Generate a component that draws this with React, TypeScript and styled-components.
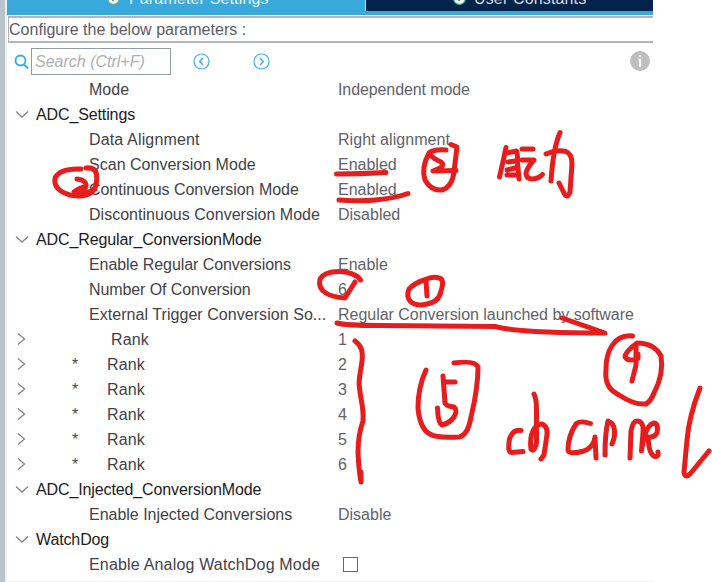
import React from "react";
import styled, { createGlobalStyle } from "styled-components";

const Global = createGlobalStyle`
  * { box-sizing: border-box; }
  body { margin: 0; background: #fff; font-family: "Liberation Sans", Arial, sans-serif; font-size: 16px; overflow: hidden; }
`;

const Window = styled.main`
  position: relative;
  display: flex;
  width: 712px;
  height: 582px;
  overflow: hidden;
`;

const Splitter = styled.div`
  width: 7px;
  flex: none;
  background: #b8c4ca;
  border-right: 2px solid #eef1f3;
`;

const Panel = styled.section`
  display: flex;
  flex-direction: column;
  width: 646px;
`;

const Tabs = styled.div`
  display: flex;
  height: 15px;
  background: #39a9dc;
  border-bottom: 3px solid #39a9dc;
`;

const Tab = styled.div<{ $active?: boolean }>`
  display: flex;
  align-items: center;
  gap: ${(p) => (p.$active ? 9 : 8)}px;
  width: ${(p) => (p.$active ? 359 : 287)}px;
  height: 25px;
  margin-top: -14px;
  padding-left: ${(p) => (p.$active ? 100 : 87)}px;
  background: ${(p) => (p.$active ? "#39a9dc" : "#03234b")};
  border-right: ${(p) => (p.$active ? "1px solid #c8dce8" : "0")};
  color: ${(p) => (p.$active ? "#eef7fc" : "#d5dce4")};
  letter-spacing: 0.15px;
  white-space: nowrap;
`;

const Caption = styled.div`
  display: flex;
  align-items: center;
  height: 27px;
  margin: 1px 0 0 1px;
  border: solid #b2b6bb;
  border-width: 2px 0 2px 1px;
  color: #5c5c62;
  letter-spacing: 0.02px;
`;

const Toolbar = styled.div`
  display: flex;
  align-items: center;
  height: 34px;
  padding: 3px 3px 1px 7px;
`;

const SearchField = styled.div`
  display: flex;
  align-items: center;
  width: 140px;
  height: 27px;
  margin: 0 21px 0 2px;
  padding: 1px 0 0 3px;
  border: 1px solid #929ca3;
  color: #b0b0b0;
  font-style: italic;
`;

const NavIcon = styled.svg`
  width: 18px;
  height: 18px;
  margin-right: 42px;
`;

const InfoIcon = styled.svg`
  width: 20px;
  height: 20px;
  margin-left: auto;
`;

const Tree = styled.div`
  display: flex;
  flex-direction: column;
  height: 505px;
  border-bottom: 1px solid #f1f1f1;
`;

const Row = styled.div`
  display: grid;
  grid-template-columns: 29px 53px 248px 1fr;
  align-items: center;
  height: 25px;
  padding-top: 1px;
  white-space: pre;
`;

const GroupName = styled.div`
  grid-column: 2 / 5;
  color: #1c1c20;
  letter-spacing: -0.12px;
`;

const Marker = styled.span`
  padding-left: 36px;
  color: #48484c;
`;

const Name = styled.span<{ $ls: number; $indent?: number }>`
  padding-left: ${(p) => p.$indent ?? 0}px;
  color: #424248;
  letter-spacing: ${(p) => p.$ls}px;
`;

const Value = styled.span<{ $ls: number }>`
  padding-left: 1px;
  color: #626268;
  letter-spacing: ${(p) => p.$ls}px;
`;

const Box = styled.span`
  display: block;
  width: 15px;
  height: 15px;
  margin-left: 6px;
  margin-top: -2px;
  border: 1px solid #686868;
`;

const Arrow = styled.svg`
  width: 14px;
  height: 14px;
  margin: -2px 0 0 8px;
`;

const Ink = styled.svg`
  position: absolute;
  inset: 0;
  fill: none;
  stroke: #e71d1d;
  stroke-width: 5;
  stroke-linecap: round;
  stroke-linejoin: round;
`;

type Item = {
  group?: string;
  name?: string;
  value?: string;
  ls?: number;
  vls?: number;
  rank?: boolean;
  star?: boolean;
  check?: boolean;
};

const items: Item[] = [
  { name: "Mode", value: "Independent mode", vls: -0.1 },
  { group: "ADC_Settings" },
  { name: "Data Alignment", value: "Right alignment", ls: 0.15, vls: 0.05 },
  { name: "Scan Conversion Mode", value: "Enabled" },
  { name: "Continuous Conversion Mode", value: "Enabled", ls: -0.04 },
  { name: "Discontinuous Conversion Mode", value: "Disabled" },
  { group: "ADC_Regular_ConversionMode" },
  { name: "Enable Regular Conversions", value: "Enable", ls: -0.07 },
  { name: "Number Of Conversion", value: "6", ls: -0.1 },
  { name: "External Trigger Conversion So...", value: "Regular Conversion launched by software", ls: 0.05, vls: -0.03 },
  { name: "Rank", value: "1", rank: true, ls: 0.15 },
  ...["2", "3", "4", "5", "6"].map((value) => ({ name: "Rank", value, rank: true, star: true, ls: 0.15 })),
  { group: "ADC_Injected_ConversionMode" },
  { name: "Enable Injected Conversions", value: "Disable", ls: -0.02 },
  { group: "WatchDog" },
  { name: "Enable Analog WatchDog Mode", check: true, ls: 0.18 },
];

const strokes = [
  // Underlines beneath the enabled modes
  "M336.5 174Q360 174 386 172.5",
  "M339 200C362 202 390 200 408 193.5",
  // Circled 2
  "M446 150Q434 149 429 153Q421 168 425 180Q431 191 442 190Q452 187 454 172L457 147L451 144.5",
  "M430 155Q434 159 441 162Q447 166 433 171L456 170.5",
  // Handwritten word
  "M506 147.5L504 157L499.5 177M507 153L516.5 151Q518 156 517.5 162L519 179M508 162L515 161M507 170L515 168M507 175L518 175M522 149H533",
  "M522 160H534Q526 169 526 174Q527 179 532 179Q538 179 542.5 174.5",
  "M546 154Q556 149 566 151.5Q572 154 572 164L570 192Q568 198 565 195L559 183M560 132.5Q553 149 551 181",
  // Circled 3
  "M81 169Q60 168 55 178Q53 190 70 195Q84 198 92 192Q98 186 96.5 174Q95 167 86 168",
  "M77 179Q87 180 86 187Q80 187 74 192L89 192L95 189",
  // Circle around the conversion count, and circled 1
  "M360.5 280C355 270 327 268 320 279C317 292 330 297 345 298L355 282",
  "M427 279Q414 283 409 289Q406 296 410 301Q416 307 427 304Q439 302 441 291Q445 279 439 278Q432 276 425 280M426 280L427 296",
  // Arrow below the trigger source
  "M337 323Q345 325.5 380 325.5L495 326.5Q520 333 605 333L562 318",
  // Brace along the ranks
  "M355 341C362 346 363 352 362 361C361 372 358 378 359.5 388C361 402 364 408 363 421C359 432 358 440 358 453Q359 472 361 482V472",
  // Circled 5
  "M426 370Q418 387 418 408Q420 433 435 436Q445 438 459 437Q468 435 471 417Q478 388 478 367Q475 360 454 363",
  "M443 376L445 403Q446 406 454 407Q458 410 454 417Q450 423 442 425Q438 423 437.5 408M445 382H455",
  // Circled 4
  "M632.5 336C613 334 606 353 606 369C604 388 614 392 619 395Q634 405 646 404Q651 401 654 393Q664 374 661 356Q654 343 637 343Q625 352 625 357Q628 362 638 358.5V354M636 345V365L632 381",
  // Channel
  "M521 430.5Q513 429 509.5 439Q507 453 512 452.5L523 451.5",
  "M534 394Q536.5 399 536.5 410V443Q534 453 531 449C529 433 535 424 542 424Q549 427 546.5 438L544 455L541 459",
  "M590.5 423.5Q580 420 576 424Q568 436 568 450Q569 455 584 451Q594 447 595 437L596 458",
  "M608 421Q605 433 605 455M608 422Q614 422 614.5 431Q615 438 612 444",
  "M630 458L631 431Q633 421 637 421Q644 421 643 433L641.5 451Q645 425 654 423Q659 424 657 433Q654 438 648 437Q649 455 655 456.5Q659 457 658 452",
  "M700 388Q689 416 687 440L684 472Q685 479 690 474L709 451",
];

function TabMark() {
  return (
    <svg width="13" height="13" viewBox="0 0 13 13">
      <circle cx="6.5" cy="6.5" r="5.8" fill="#fff" stroke="#54b58a" strokeWidth="1.3" />
      <path d="M3.5 6L6 8L9.5 4" fill="none" stroke="#24965b" strokeWidth="1.8" />
    </svg>
  );
}

function Nav({ next = false }: { next?: boolean }) {
  return (
    <NavIcon viewBox="0 0 18 18" fill="none" stroke="#43b0df">
      <circle cx="9.5" cy="9.5" r="7.5" strokeWidth="1.2" />
      <path d={next ? "M8 6L11.3 9.5L8 13" : "M11 6L7.7 9.5L11 13"} strokeWidth="1.5" />
    </NavIcon>
  );
}

function TreeRow({ item }: { item: Item }) {
  const expandable = item.group || item.rank;
  return (
    <Row>
      {expandable ? (
        <Arrow viewBox="0 0 14 14" fill="none" stroke="#858585" strokeWidth="1.3">
          <path d={item.group ? "M1 4.5L7 10L13 4.5" : "M3 1.5L9.5 7L3 12.5"} />
        </Arrow>
      ) : (
        <span />
      )}
      {item.group ? (
        <GroupName>{item.group}</GroupName>
      ) : (
        <>
          <Marker>{item.star ? "*" : ""}</Marker>
          <Name $ls={item.ls ?? 0.02} $indent={item.rank ? (item.star ? 18 : 22) : 0}>
            {item.name}
          </Name>
          {item.check ? <Box /> : <Value $ls={item.vls ?? 0}>{item.value}</Value>}
        </>
      )}
    </Row>
  );
}

export default function App() {
  return (
    <Window>
      <Global />
      <Splitter />
      <Panel>
        <Tabs>
          <Tab $active><TabMark />Parameter Settings</Tab>
          <Tab><TabMark />User Constants</Tab>
        </Tabs>
        <Caption>Configure the below parameters :</Caption>
        <Toolbar>
          <svg width="15" height="16" viewBox="0 0 15 16" fill="none" stroke="#38a9dc" strokeWidth="1.8">
            <circle cx="6.5" cy="7.5" r="5" />
            <path d="M10 11.5L14 15.5" />
          </svg>
          <SearchField>Search (Ctrl+F)</SearchField>
          <Nav />
          <Nav next />
          <InfoIcon viewBox="0 0 20 20">
            <circle cx="10" cy="10" r="10" fill="#bfbfbf" />
            <path d="M10 4V6M8.5 8.5H10V16" fill="none" stroke="#fff" strokeWidth="2.2" />
          </InfoIcon>
        </Toolbar>
        <Tree>
          {items.map((item, i) => <TreeRow key={i} item={item} />)}
        </Tree>
      </Panel>
      <Ink width="712" height="582" viewBox="0 0 712 582">
        {strokes.map((d) => <path key={d} d={d} />)}
      </Ink>
    </Window>
  );
}
